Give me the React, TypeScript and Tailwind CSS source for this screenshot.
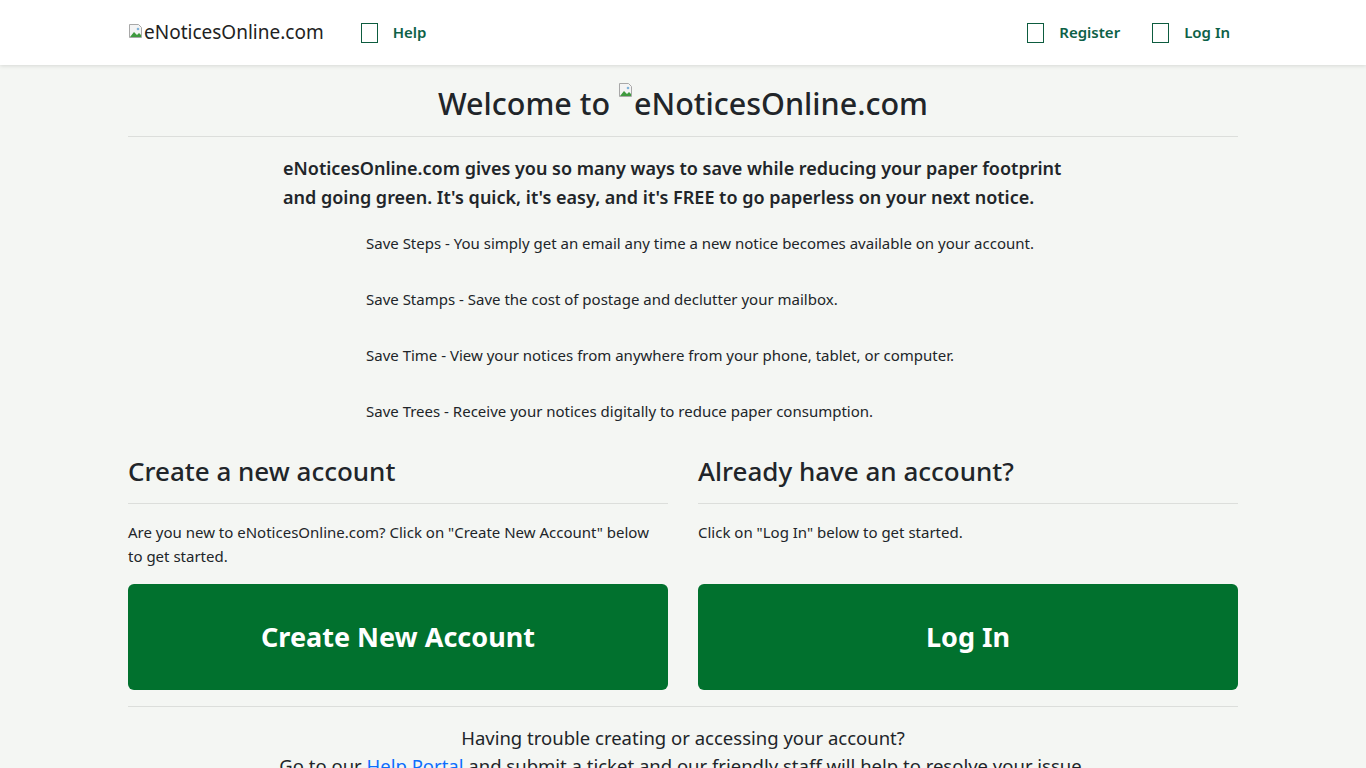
import React from "react";

const font = { fontFamily: '"Noto Sans", "Open Sans", sans-serif' };

const perks = [
  "Save Steps - You simply get an email any time a new notice becomes available on your account.",
  "Save Stamps - Save the cost of postage and declutter your mailbox.",
  "Save Time - View your notices from anywhere from your phone, tablet, or computer.",
  "Save Trees - Receive your notices digitally to reduce paper consumption.",
];

const BrokenImg = () => (
  <svg width="16" height="16" viewBox="0 0 16 16" className="inline-block align-top shrink-0">
    <path d="M1.5 1.5h9l3 3v10h-12z" fill="#f4f4f4" stroke="#a8a8a8" />
    <path d="M2 14l4-5 3 3 2-2 2 2v2H2z" fill="#3f9a3f" />
    <circle cx="10" cy="6" r="1.3" fill="#7fb3d9" />
  </svg>
);

const Box = () => (
  <span className="inline-block w-[17px] h-[20px] border border-[#0d5c3f] mr-[15px]" />
);

const NavLink = ({ label }: { label: string }) => (
  <a href="#" className="flex items-center text-[15px] font-semibold text-[#0d6147]">
    <Box />
    {label}
  </a>
);

export default function App() {
  return (
    <div className="min-h-screen bg-[#f4f6f3] text-[#212529]" style={font}>
      <header className="h-[65px] bg-white shadow-[0_1px_4px_rgba(0,0,0,0.12)]">
        <div className="w-[1110px] mx-auto h-full flex items-center justify-between">
          <div className="flex items-center">
            <span className="flex items-start text-[19px] leading-none text-[#222]">
              <BrokenImg />
              eNoticesOnline.com
            </span>
            <div className="ml-[37px]">
              <NavLink label="Help" />
            </div>
          </div>
          <div className="flex items-center gap-8 mr-2">
            <NavLink label="Register" />
            <NavLink label="Log In" />
          </div>
        </div>
      </header>

      <main className="w-[1110px] mx-auto">
        <h1 className="pt-[17px] pb-[12px] text-center text-[30.5px] leading-[42px] font-medium border-b border-[#dcdedb]">
          Welcome to <BrokenImg />eNoticesOnline.com
        </h1>

        <p className="mt-[17px] pl-[155px] pr-[150px] text-[18px] leading-[29px] font-semibold">
          eNoticesOnline.com gives you so many ways to save while reducing your paper footprint and going green. It's quick, it's easy, and it's FREE to go paperless on your next notice.
        </p>

        <ul className="mt-[19px] pl-[238px]">
          {perks.map((p) => (
            <li key={p} className="text-[15px] leading-[24px] mb-[32px]">
              {p}
            </li>
          ))}
        </ul>

        <div className="grid grid-cols-2 gap-[30px] -mt-[2px]">
          <section>
            <h2 className="text-[26px] leading-[36px] font-medium pb-[14px] border-b border-[#dcdedb]">
              Create a new account
            </h2>
            <p className="mt-[16px] pr-[10px] text-[15px] leading-[24px] h-[48px]">
              Are you new to eNoticesOnline.com? Click on "Create New Account" below to get started.
            </p>
            <a href="#" className="mt-[16px] flex items-center justify-center h-[106px] rounded-md bg-[#01712e] text-white text-[27px] font-bold">
              Create New Account
            </a>
          </section>
          <section>
            <h2 className="text-[26px] leading-[36px] font-medium pb-[14px] border-b border-[#dcdedb]">
              Already have an account?
            </h2>
            <p className="mt-[16px] text-[15px] leading-[24px] h-[48px]">
              Click on "Log In" below to get started.
            </p>
            <a href="#" className="mt-[16px] flex items-center justify-center h-[106px] rounded-md bg-[#01712e] text-white text-[27px] font-bold">
              Log In
            </a>
          </section>
        </div>

        <div className="mt-[16px] border-t border-[#dcdedb] pt-[17px] text-center text-[18.5px] leading-[28px]">
          <p>Having trouble creating or accessing your account?</p>
          <p>
            Go to our <a href="#" className="text-[#0d6efd]">Help Portal</a> and submit a ticket and our friendly staff will help to resolve your issue.
          </p>
        </div>
      </main>
    </div>
  );
}
